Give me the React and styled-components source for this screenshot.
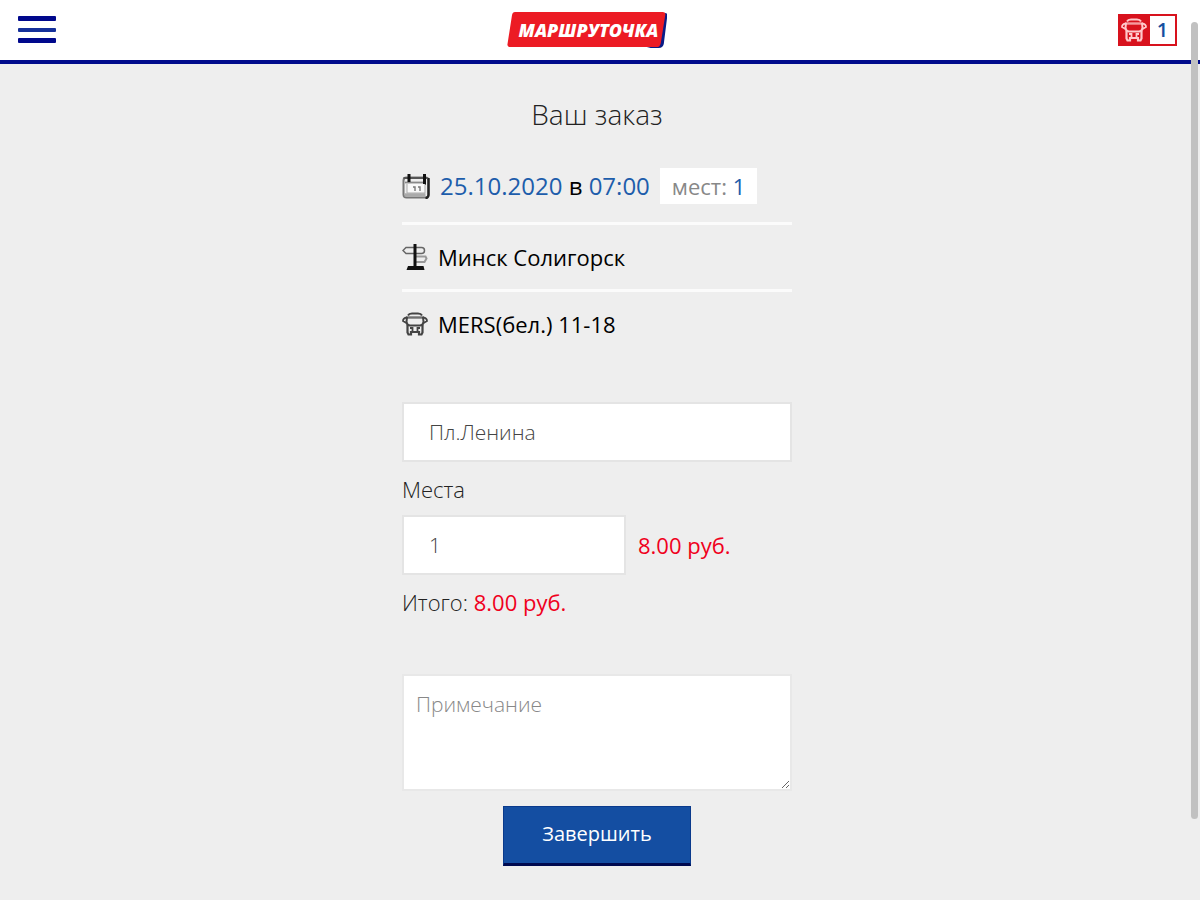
import React, { useState } from 'react'
import styled, { createGlobalStyle } from 'styled-components'

const GlobalStyle = createGlobalStyle`
  * {
    box-sizing: border-box;
  }
  body {
    margin: 0;
    background: #eee;
    color: #222;
    font-family: "Open Sans", "Noto Sans", sans-serif;
    font-size: 22px;
    font-weight: 300;
    line-height: 36px;
  }
  input, textarea, button {
    font: inherit;
  }
`

const Header = styled.header`
  display: flex;
  align-items: center;
  justify-content: space-between;
  height: 64px;
  padding: 0 23px 0 18px;
  background: #fff;
  border-bottom: 4px solid #000b8c;
`

const MenuButton = styled.button`
  display: flex;
  padding: 0;
  border: 0;
  background: none;
  cursor: pointer;
`

const Logo = styled.a`
  position: relative;
  display: block;
  padding: 0 9px 0 12px;
  color: #fff;
  font-family: "Open Sans", sans-serif;
  font-size: 18px;
  font-style: italic;
  font-weight: 800;
  text-decoration: none;
`

const LogoPlate = styled.svg`
  position: absolute;
  inset: 0;
  width: 100%;
  height: 100%;
`

const LogoText = styled.span`
  position: relative;
`

const Cart = styled.a`
  display: flex;
  align-items: center;
  height: 32px;
  border: 2px solid #d8121d;
  background: #d8121d;
  text-decoration: none;
`

const CartIcon = styled.span`
  display: flex;
  padding: 0 3px 0 1px;
  color: #ffc9cb;
`

const CartCount = styled.span`
  width: 25px;
  height: 28px;
  background: #fff;
  color: #1450a0;
  font-size: 20px;
  font-weight: 600;
  line-height: 28px;
  text-align: center;
`

const Main = styled.main`
  max-width: 390px;
  margin: 0 auto;
  padding: 32px 0;
`

const Page = styled.div`
  padding-right: 6px;
`

const Title = styled.h1`
  margin: 0 0 18px;
  font-size: 28px;
  font-weight: 300;
  text-align: center;
`

const Row = styled.div`
  display: flex;
  align-items: center;
  gap: 10px;
  padding: ${props => props.tall ? '18px 0' : '14px 0'};
  border-bottom: ${props => props.last ? '0' : '3px solid #fbfbfb'};
  color: #000;
  font-weight: 400;

  svg {
    flex: none;
  }
`

const When = styled.span`
  font-size: 24px;
`

const Accent = styled.span`
  color: #1d5dab;
`

const Badge = styled.span`
  padding: 0 12px;
  background: #fff;
  color: #888;
`

const Form = styled.form`
  display: flex;
  flex-direction: column;
  margin-top: 46px;
`

const Input = styled.input`
  width: ${props => props.short ? '224px' : '100%'};
  height: 60px;
  padding: 0 25px;
  border: 2px solid #e4e4e4;
  border-radius: 0;
  background: #fff;
  color: #444;
  font-size: 21px;
  outline: none;
`

const Line = styled.div`
  padding: 9px 0 8px;
`

const Seats = styled.div`
  display: flex;
  align-items: center;
  gap: 12px;
`

const Price = styled.span`
  color: #f0001c;
  font-weight: 400;
`

const Note = styled.textarea`
  display: block;
  width: 100%;
  height: 117px;
  margin-top: 46px;
  padding: 10px 12px;
  border: 2px solid #e8e8e8;
  border-radius: 0;
  background: #fff;
  color: #444;
  font-size: 21px;
  outline: none;
  resize: vertical;

  &::placeholder {
    color: #888;
  }
`

const Submit = styled.button`
  align-self: center;
  margin-top: 15px;
  padding: 9px 38px 11px;
  border: 1px solid #0a3a8c;
  border-bottom: 3px solid #000a50;
  background: #144ea2;
  color: #fff;
  font-size: 20px;
  font-weight: 400;
  cursor: pointer;
`

const ScrollThumb = styled.div`
  position: fixed;
  top: 22px;
  right: 2px;
  bottom: 81px;
  width: 7px;
  border-radius: 4px;
  background: #c1c1c1;
`

const MenuIcon = () => (
  <svg width='38' height='28' viewBox='0 0 38 28' aria-hidden='true'>
    <rect x='0' y='0' width='38' height='5' rx='1' fill='#00088c' />
    <rect x='0' y='12' width='38' height='4' rx='1' fill='#15309a' />
    <rect x='0' y='22' width='38' height='5' rx='1' fill='#00088c' />
  </svg>
)

const CalendarIcon = () => (
  <svg width='28' height='26' viewBox='0 0 28 26' aria-hidden='true'>
    <rect x='1.5' y='4.5' width='25' height='20' rx='3' fill='#eee' stroke='#777' strokeWidth='2' />
    <path d='M26.5 5v17a3 3 0 0 1-3 3' fill='none' stroke='#222' strokeWidth='2.4' />
    <path d='M1.5 5h24' stroke='#555' strokeWidth='2' />
    <path d='M2.5 22h21' stroke='#aaa' strokeWidth='3.5' />
    <path d='M3 9.500h21' fill='none' stroke='#888' strokeWidth='1.8' />
    <path d='M7 1v8M22.500 1v11' stroke='#111' strokeWidth='3' />
    <path d='M5 11v9h18v-9' fill='#f8f8f8' stroke='#aaa' strokeWidth='1' />
    <path d='M11 14h2v4M16 14h2v4' fill='none' stroke='#777' strokeWidth='1.4' />
  </svg>
)

const SignIcon = () => (
  <svg width='26' height='28' viewBox='0 0 26 28' aria-hidden='true'>
    <path d='M4 4.500h15.500q3 0 3 3t-3 3H4L1 7.500z' fill='#eee' stroke='#666' strokeWidth='1.500' />
    <path d='M13 13.500h10.500l1 2-2 3.500H13' fill='none' stroke='#999' strokeWidth='2' />
    <path d='M13 1v23' stroke='#111' strokeWidth='3' />
    <path d='M6 23h15.500l1 4h-18z' fill='#111' />
  </svg>
)

const BusIcon = ({ light }) => (
  <svg width='26' height='24' viewBox='0 0 26 24' fill='none' stroke={light ? 'currentColor' : '#444'} aria-hidden='true'>
    <path d='M6 3.500Q7 1.500 10 1.500h6q3 0 4 2' strokeWidth='2' />
    <path d='M4 5.500h18' strokeWidth='2.400' opacity='.75' />
    <path d='M5 5L4.500 10Q5 13.500 8 13.500h10q3 0 3.500-3.500L21 5' strokeWidth='2' />
    <path d='M5 5.500Q1 6 1 9l3.500 2M21 5.500q4 .5 4 3.500l-3.500 2' strokeWidth='1.800' />
    <path d='M5.500 13v7.500l1 2h2.500V20h8v2.500h2.500l1-2V13' strokeWidth='2.200' />
    <path d='M8 16h2.500v3M18 16h-2.500v3' strokeWidth='1.800' />
  </svg>
)

const App = () => {
  const [stop, setStop] = useState('Пл.Ленина')
  const [seats, setSeats] = useState('1')
  const [note, setNote] = useState('')

  const total = (Number(seats) * 8 || 0).toFixed(2)

  return (
    <>
      <GlobalStyle />
      <Header>
        <MenuButton type='button' aria-label='Меню'><MenuIcon /></MenuButton>
        <Logo href='#'>
          <LogoPlate viewBox='0 0 160 37' preserveAspectRatio='none' aria-hidden='true'>
            <path d='M9 1H157Q160 1 159.500 4L156 33Q155 37 151 37H143z' fill='#0b1c86' />
            <path d='M8 0H155Q158 0 157.500 3L153 32Q152 36 149 36H3Q0 36 .5 33L5 3Q5.500 0 8 0z' fill='#ec1b24' />
          </LogoPlate>
          <LogoText>МАРШРУТОЧКА</LogoText>
        </Logo>
        <Cart href='#' aria-label='Заказы: 1'>
          <CartIcon><BusIcon light /></CartIcon>
          <CartCount>1</CartCount>
        </Cart>
      </Header>
      <Page>
        <Main>
          <Title>Ваш заказ</Title>
          <Row tall>
            <CalendarIcon />
            <When><Accent>25.10.2020</Accent> в <Accent>07:00</Accent></When>
            <Badge>мест: <Accent>1</Accent></Badge>
          </Row>
          <Row>
            <SignIcon />
            <span>Минск Солигорск</span>
          </Row>
          <Row last>
            <BusIcon />
            <span>MERS(бел.) 11-18</span>
          </Row>
          <Form onSubmit={(e) => e.preventDefault()}>
            <Input aria-label='Остановка' value={stop} onChange={(e) => setStop(e.target.value)} />
            <Line><label htmlFor='seats'>Места</label></Line>
            <Seats>
              <Input id='seats' short inputMode='numeric' value={seats} onChange={(e) => setSeats(e.target.value)} />
              <Price>8.00 руб.</Price>
            </Seats>
            <Line>Итого: <Price>{total} руб.</Price></Line>
            <Note aria-label='Примечание' placeholder='Примечание' value={note} onChange={(e) => setNote(e.target.value)} />
            <Submit type='submit'>Завершить</Submit>
          </Form>
        </Main>
      </Page>
      <ScrollThumb />
    </>
  )
}

export default App
